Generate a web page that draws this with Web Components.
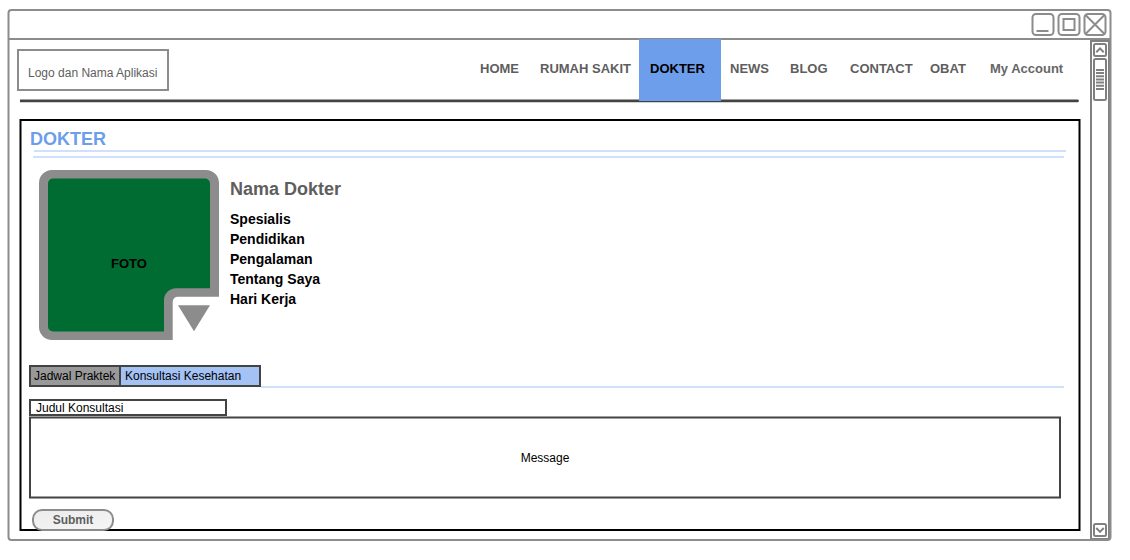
<!DOCTYPE html>
<html lang="id">
<head>
<meta charset="utf-8">
<title>Dokter</title>
<style>
body{margin:0;background:#fff;font-family:"Liberation Sans",Arial,sans-serif;font-size:12px;line-height:14px;color:#000;overflow:hidden}
</style>
</head>
<body>
<wf-window>
  <wf-header slot="page"></wf-header>
  <wf-panel slot="page" heading="DOKTER">
    <wf-profile></wf-profile>
    <wf-tabs></wf-tabs>
    <wf-form></wf-form>
  </wf-panel>
</wf-window>
<script>
function define(name, render) {
  customElements.define(name, class extends HTMLElement {
    connectedCallback() {
      if (this.shadowRoot) return;
      this.attachShadow({mode: 'open'}).innerHTML = render(this);
    }
  });
}

define('wf-window', () => `
<style>
:host{display:grid;position:relative;grid-template-rows:27px 2px 1fr;box-sizing:border-box;width:1104px;height:532px;margin:9px 0 0 8px;border:2px solid transparent}
.frame{position:absolute;inset:-2px;width:1104px;height:532px;overflow:visible;pointer-events:none}
header{display:flex;justify-content:flex-end}
header svg{display:block;width:80px;height:27px}
.line{background:#8c8c8c;margin-left:-1px}
.main{display:grid;grid-template-columns:1fr 21px;min-height:0}
.page{min-width:0}
</style>
<svg class="frame" viewBox="8 9 1104 532"><rect x="8.5" y="10" width="1102" height="530" rx="3" fill="none" stroke="#8c8c8c" stroke-width="2"/></svg>
<header><svg viewBox="1030 11 80 27" fill="none" stroke="#8c8c8c" stroke-width="2">
<rect x="1032.5" y="14" width="21" height="21" rx="3.5"/><path d="M1036.5 31h12"/>
<rect x="1058.5" y="14" width="21" height="21" rx="3.5"/><rect x="1063.5" y="19" width="11" height="11"/>
<rect x="1084.5" y="14" width="21" height="21" rx="3.5"/><path d="M1085.5 15l19 19M1104.5 15l-19 19"/>
</svg></header>
<div class="line"></div>
<div class="main"><div class="page"><slot name="page"></slot></div><wf-scrollbar></wf-scrollbar></div>`);

define('wf-scrollbar', () => `
<style>:host{display:block}svg{display:block;width:21px;height:500px;overflow:visible}</style>
<svg viewBox="1089 40 21 500" fill="none" stroke="#808080" stroke-width="2">
<rect x="1091" y="41" width="18" height="498"/>
<rect x="1094" y="44" width="12" height="12" rx="1.5"/><path d="M1096.3 52.3l3.7-3.9 3.7 3.9"/>
<rect x="1094" y="59" width="12" height="41" rx="1.5"/>
<path d="M1096 70h8M1096 73.1h8M1096 76.3h8M1096 79.4h8M1096 82.6h8M1096 85.8h8M1096 89h8"/>
<rect x="1094" y="524" width="12" height="12" rx="1.5"/><path d="M1096.3 528l3.7 3.9 3.7-3.9"/>
</svg>`);

define('wf-header', () => `
<style>
:host{display:block}
.row{display:flex;justify-content:space-between;height:59px;padding:0 11px 0 7px}
.logo{box-sizing:border-box;width:152px;height:42px;margin-top:9px;border:2px solid #8c8c8c;padding:15px 0 0 9px;color:#5e5e5e;white-space:nowrap}
nav{display:grid;grid-template-columns:60px 99px 82px 69px 60px 80px 60px 88px;font-size:13px;font-weight:bold;line-height:15px;color:#5e5e5e;white-space:nowrap}
nav span{padding-top:21px}
nav .active{box-sizing:border-box;position:relative;z-index:1;height:62px;margin-top:-1px;background:#6d9eeb;color:#000;padding:22px 0 0 11px}
nav .news{padding-left:9px}
.last{color:#666}
svg{display:block;width:1059px;height:4px;margin-left:10px}
</style>
<div class="row"><div class="logo">Logo dan Nama Aplikasi</div>
<nav><span>HOME</span><span>RUMAH SAKIT</span><span class="active">DOKTER</span><span class="news">NEWS</span><span>BLOG</span><span>CONTACT</span><span>OBAT</span><span class="last">My Account</span></nav></div>
<svg viewBox="20 99 1059 4"><path d="M20.5 100.9h1057" stroke="#434343" stroke-width="2.8" stroke-linecap="round"/></svg>`);

define('wf-panel', el => `
<style>
:host{display:block;position:relative;box-sizing:border-box;width:1061px;height:412px;margin:16px 0 0 10px;border:2px solid transparent}
.frame{position:absolute;inset:-2px;width:1061px;height:412px;overflow:visible;pointer-events:none}
h1{margin:0;padding:8px 0 0 8px;height:21px;font-size:18px;line-height:20px;color:#6d9eeb}
.a,.b{height:2px;background:#cfe0fc}
.a{width:1032px;margin-left:12px}
.b{width:1031px;margin:4px 0 0 11px}
</style>
<svg class="frame" viewBox="20 119 1061 412"><rect x="20.5" y="120" width="1059" height="410" fill="none" stroke="#000" stroke-width="2"/></svg>
<h1>${el.getAttribute('heading')}</h1><div class="a"></div><div class="b"></div><slot></slot>`);

define('wf-profile', () => `
<style>
:host{display:flex;gap:11px;margin:12px 0 0 17px;height:170px}
.photo{display:grid;width:180px;height:170px}
.photo>*{grid-area:1/1}
.photo span{align-self:start;justify-self:center;margin-top:86px;font-size:13px;line-height:15px;font-weight:bold}
h2{margin:8px 0 0;font-size:18px;line-height:22px;color:#5e5e5e}
ul{list-style:none;margin:9px 0 0;padding:0;font-size:14px;font-weight:bold;line-height:20px}
</style>
<div class="photo"><svg viewBox="39 170 180 170" width="180" height="170">
<path d="M52 170H206A13 13 0 0 1 219 183V296.7H177.7A5 5 0 0 0 172.7 301.7V340H52A13 13 0 0 1 39 327V183A13 13 0 0 1 52 170Z" fill="#8c8c8c"/>
<path d="M53 178.5H205A5 5 0 0 1 210 183.5V288.3H176A12 12 0 0 0 164 300.3V331.5H53A5 5 0 0 1 48 326.5V183.5A5 5 0 0 1 53 178.5Z" fill="#006c31"/>
<path d="M178 305.3h32l-16 26z" fill="#8c8c8c"/></svg><span>FOTO</span></div>
<div><h2>Nama Dokter</h2><ul><li>Spesialis</li><li>Pendidikan</li><li>Pengalaman</li><li>Tentang Saya</li><li>Hari Kerja</li></ul></div>`);

define('wf-tabs', () => `
<style>
:host{display:flex;align-items:flex-end;margin:25px 0 0 7px;height:23px}
span{box-sizing:border-box;height:22px;margin-bottom:1px;border:2px solid #434343;padding:2px 0 0 3px;white-space:nowrap}
.one{width:92px;background:#999}
.two{width:142px;margin-left:-2px;padding-left:4px;background:#a4c2f4}
i{width:803px;height:2px;background:#cfe0fc}
</style>
<span class="one">Jadwal Praktek</span><span class="two">Konsultasi Kesehatan</span><i></i>`);

define('wf-form', () => `
<style>
:host{display:block;margin:11px 0 0 7px}
.title{box-sizing:border-box;border:2px solid #434343;width:198px;height:17px;line-height:14px;padding-left:5px}
.message{display:grid;width:1032px;height:83px}
.message>*{grid-area:1/1}
svg{display:block;width:1032px;height:83px}
.message span{justify-self:center;margin-top:35px}
button{display:block;box-sizing:border-box;position:relative;width:82px;height:22px;margin:10px 0 0 3px;padding:0;border:2px solid #8c8c8c;border-radius:10px;background:linear-gradient(170deg,#ececec,#f5f5f5);color:#5e5e5e;font:bold 12px/14px "Liberation Sans",Arial,sans-serif}
</style>
<div class="title">Judul Konsultasi</div>
<div class="message"><svg viewBox="0 0 1032 83"><rect x="1" y="1.5" width="1030" height="80" fill="none" stroke="#434343" stroke-width="2"/></svg><span>Message</span></div>
<button>Submit</button>`);
</script>
</body>
</html>
